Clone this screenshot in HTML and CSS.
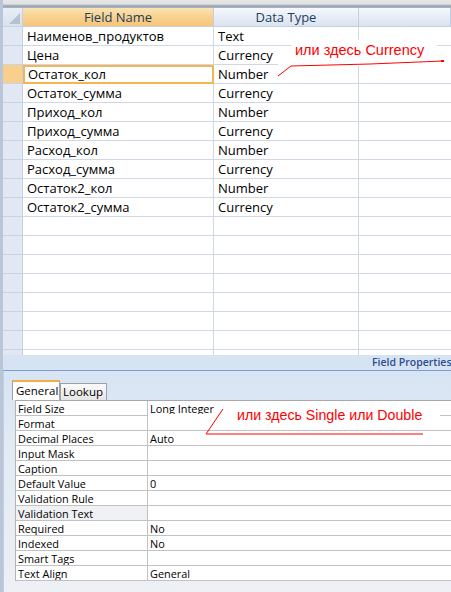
FILE: index.html
```html
<!DOCTYPE html>
<html>
<head>
<meta charset="utf-8">
<link rel="stylesheet" href="styles.css">
</head>
<body>
<div class="app">
  <div class="topstrip"></div>
  <div class="sheet">
    <div class="row head">
      <div class="sel corner"><svg width="14" height="14" viewBox="0 0 14 14"><polygon points="13,2 13,13 2,13" fill="#b4c1d3"/></svg></div>
      <div class="c c1 hcur">Field Name</div>
      <div class="c c2 hdr">Data Type</div>
      <div class="c c3 hdr"></div>
    </div>
    <div class="row"><div class="sel"></div><div class="c c1">Наименов_продуктов</div><div class="c c2">Text</div><div class="c c3"></div></div>
    <div class="row"><div class="sel"></div><div class="c c1">Цена</div><div class="c c2">Currency</div><div class="c c3"></div></div>
    <div class="row cur"><div class="sel"></div><div class="c c1">Остаток_кол</div><div class="c c2">Number</div><div class="c c3"></div></div>
    <div class="row"><div class="sel"></div><div class="c c1">Остаток_сумма</div><div class="c c2">Currency</div><div class="c c3"></div></div>
    <div class="row"><div class="sel"></div><div class="c c1">Приход_кол</div><div class="c c2">Number</div><div class="c c3"></div></div>
    <div class="row"><div class="sel"></div><div class="c c1">Приход_сумма</div><div class="c c2">Currency</div><div class="c c3"></div></div>
    <div class="row"><div class="sel"></div><div class="c c1">Расход_кол</div><div class="c c2">Number</div><div class="c c3"></div></div>
    <div class="row"><div class="sel"></div><div class="c c1">Расход_сумма</div><div class="c c2">Currency</div><div class="c c3"></div></div>
    <div class="row"><div class="sel"></div><div class="c c1">Остаток2_кол</div><div class="c c2">Number</div><div class="c c3"></div></div>
    <div class="row"><div class="sel"></div><div class="c c1">Остаток2_сумма</div><div class="c c2">Currency</div><div class="c c3"></div></div>
    <div class="row"><div class="sel"></div><div class="c c1"></div><div class="c c2"></div><div class="c c3"></div></div>
    <div class="row"><div class="sel"></div><div class="c c1"></div><div class="c c2"></div><div class="c c3"></div></div>
    <div class="row"><div class="sel"></div><div class="c c1"></div><div class="c c2"></div><div class="c c3"></div></div>
    <div class="row"><div class="sel"></div><div class="c c1"></div><div class="c c2"></div><div class="c c3"></div></div>
    <div class="row"><div class="sel"></div><div class="c c1"></div><div class="c c2"></div><div class="c c3"></div></div>
    <div class="row"><div class="sel"></div><div class="c c1"></div><div class="c c2"></div><div class="c c3"></div></div>
    <div class="row"><div class="sel"></div><div class="c c1"></div><div class="c c2"></div><div class="c c3"></div></div>
    <div class="row"><div class="sel"></div><div class="c c1"></div><div class="c c2"></div><div class="c c3"></div></div>
  </div>
  <div class="band"><span class="band-title">Field Properties</span></div>
  <div class="props">
    <div class="tabs">
      <div class="tab on">General</div>
      <div class="tab">Lookup</div>
    </div>
    <div class="pgrid">
      <div class="pl">Field Size</div><div class="pv">Long Integer</div>
      <div class="pl">Format</div><div class="pv"></div>
      <div class="pl">Decimal Places</div><div class="pv">Auto</div>
      <div class="pl">Input Mask</div><div class="pv"></div>
      <div class="pl">Caption</div><div class="pv"></div>
      <div class="pl">Default Value</div><div class="pv">0</div>
      <div class="pl">Validation Rule</div><div class="pv"></div>
      <div class="pl alt">Validation Text</div><div class="pv"></div>
      <div class="pl">Required</div><div class="pv">No</div>
      <div class="pl">Indexed</div><div class="pv">No</div>
      <div class="pl">Smart Tags</div><div class="pv"></div>
      <div class="pl">Text Align</div><div class="pv">General</div>
    </div>
  </div>

  <div class="mask mask1"></div>
  <div class="mask mask2"></div>
  <div class="note note1">или здесь Currency</div>
  <div class="note note2">или здесь Single или Double</div>
  <svg class="ink" width="451" height="592" viewBox="0 0 451 592">
    <polyline points="278,76 291,66 370,64 443,61" fill="none" stroke="#ff0000" stroke-width="1"/>
    <rect x="441" y="60" width="3" height="2" fill="#ff0000"/>
    <polyline points="223,409 206,434 423,434" fill="none" stroke="#ff0000" stroke-width="1"/>
  </svg>
</div>
</body>
</html>
```

FILE: styles.css
```css
html, body {
  margin: 0;
  padding: 0;
}
body {
  width: 451px;
  height: 592px;
  overflow: hidden;
  background: #ffffff;
}
.app {
  position: relative;
  width: 451px;
  height: 592px;
  overflow: hidden;
  display: flex;
  flex-direction: column;
  box-sizing: border-box;
  border-left: 3px solid #b9c6d7;
  box-shadow: inset 1px 0 0 #8ea0b6;
  font-family: "Open Sans", "DejaVu Sans", sans-serif;
}
.topstrip {
  height: 8px;
  flex: none;
  background: linear-gradient(#e6e6e6 0, #e2e2e2 4px, #b3bcc8 5px, #8f9aaa 7px, #c2ccd8 8px);
}
.sheet {
  height: 347px;
  flex: none;
  overflow: hidden;
  background: #ffffff;
}
.row {
  display: flex;
  height: 19px;
  box-sizing: border-box;
}
.sel {
  width: 20px;
  flex: none;
  box-sizing: border-box;
  background: #e1e8f3;
  border-right: 1px solid #c4cfdf;
  border-bottom: 1px solid #c9d3e2;
}
.c {
  box-sizing: border-box;
  height: 19px;
  border-right: 1px solid #d0d8e6;
  border-bottom: 1px solid #d0d8e6;
  font-size: 13px;
  line-height: 18px;
  color: #000;
  padding-left: 4px;
  white-space: nowrap;
  overflow: hidden;
}
.c1 { width: 191px; flex: none; }
.c2 { width: 145px; flex: none; }
.c3 { flex: 1; border-right: none; }
.head .c {
  text-align: center;
  padding-left: 0;
  color: #243c5c;
  border-bottom: 1px solid #c3cfe0;
  border-right: 1px solid #c3cfe0;
}
.hdr {
  background: linear-gradient(#f6f8fc, #e8eef7 45%, #dae3f0);
}
.hcur {
  background: linear-gradient(#fbe3b3, #f8d393 45%, #f6c577);
}
.corner {
  background: linear-gradient(#e9eef6, #d8e1ee);
  display: flex;
  align-items: flex-end;
  justify-content: flex-end;
  padding: 0 1px 1px 0;
}
.corner svg { display: block; }
.cur .sel {
  background: #f8cf8d;
}
.cur .c1 {
  border: 2px solid #f7b452;
  line-height: 15px;
  padding-left: 3px;
}
.band {
  height: 16px;
  flex: none;
  box-sizing: border-box;
  background: #d6e3f3;
  border-bottom: 1px solid #7e9ed0;
  padding-left: 369px;
  white-space: nowrap;
  overflow: hidden;
  font-size: 10.5px;
  line-height: 15px;
}
.band-title {
  font-weight: 600;
  color: #2f4d8e;
}
.props {
  flex: 1;
  background: linear-gradient(#d7e4f3, #e4ebf4 40%, #edf0f5);
  padding: 9px 0 0 9px;
  box-shadow: inset 1px 0 0 #c2cedd;
}
.tabs {
  display: flex;
  align-items: flex-end;
  height: 20px;
}
.tab {
  box-sizing: border-box;
  font-size: 11.5px;
  color: #000;
  border: 1px solid #9aa3ad;
  border-bottom: none;
  background: linear-gradient(#fbfbfb, #e6e6e6);
  height: 17px;
  line-height: 16px;
  padding: 0 3px 0 2px;
  white-space: nowrap;
}
.tab.on {
  height: 20px;
  background: #ffffff;
  border-top: 2px solid #f3ae4a;
  line-height: 18px;
  padding: 0 3px 0 3px;
  width: 48px;
}
.pgrid {
  margin-left: 3px;
  display: grid;
  grid-template-columns: 132px 1fr;
  grid-auto-rows: 15px;
  border-top: 1px solid #a8a8a8;
  border-left: 1px solid #b4b4b4;
  background: #ffffff;
  width: 436px;
}
.pl, .pv {
  box-sizing: border-box;
  font-size: 10.9px;
  line-height: 14px;
  padding-top: 1px;
  border-bottom: 1px solid #c2c2c2;
  white-space: nowrap;
  overflow: hidden;
  color: #000;
}
.pl {
  border-right: 1px solid #c2c2c2;
  padding-left: 2px;
}
.pl.alt { background: #eff1f4; }
.pv { padding-left: 2px; }
.note {
  position: absolute;
  background: #ffffff;
  color: #ff0000;
  font-family: "Liberation Sans", Arial, sans-serif;
  white-space: nowrap;
}
.note1 {
  left: 288px;
  top: 40px;
  width: 146px;
  height: 23px;
  font-size: 14.5px;
  line-height: 20px;
  padding-left: 4px;
  box-sizing: border-box;
}
.note2 {
  left: 220px;
  top: 404px;
  width: 217px;
  height: 26px;
  font-size: 14.2px;
  line-height: 22px;
  padding-left: 14px;
  box-sizing: border-box;
}
.mask {
  position: absolute;
  background: #ffffff;
}
.mask1 { left: 275px; top: 62px; width: 173px; height: 4px; }
.mask2 { left: 145px; top: 414px; width: 292px; height: 3px; }
.ink {
  position: absolute;
  left: -3px;
  top: 0;
  pointer-events: none;
}
```
